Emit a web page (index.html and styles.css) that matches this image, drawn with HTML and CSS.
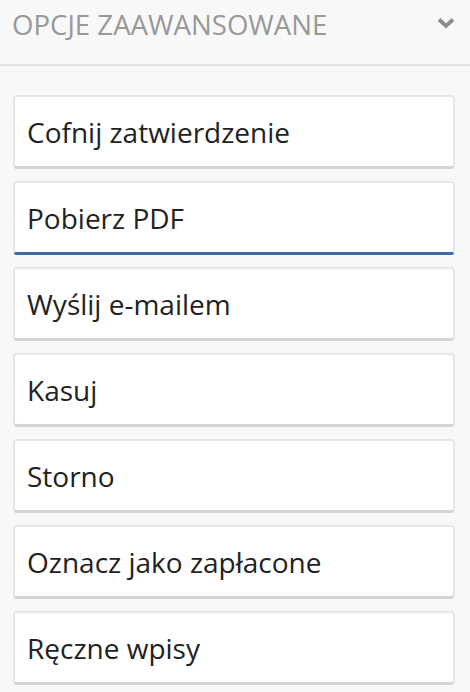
FILE: index.html
```html
<!DOCTYPE html>
<html lang="pl">
<head>
<meta charset="utf-8">
<link rel="stylesheet" href="styles.css">
</head>
<body>
<div class="panel">
  <div class="header">
    <span class="title">OPCJE ZAAWANSOWANE</span>
    <svg class="chev" width="18" height="12" viewBox="0 0 18 12"><path d="M2 2.5 L9 9 L16 2.5" fill="none" stroke="#8c8c8c" stroke-width="3.8" stroke-linecap="butt" stroke-linejoin="miter"/></svg>
  </div>
  <div class="list">
    <button class="btn">Cofnij zatwierdzenie</button>
    <button class="btn active">Pobierz PDF</button>
    <button class="btn">Wyślij e-mailem</button>
    <button class="btn">Kasuj</button>
    <button class="btn">Storno</button>
    <button class="btn">Oznacz jako zapłacone</button>
    <button class="btn">Ręczne wpisy</button>
  </div>
</div>
</body>
</html>
```
FILE: styles.css
```css
html, body {
  margin: 0;
  padding: 0;
  background: #f8f8f8;
}
body {
  font-family: "Open Sans", "DejaVu Sans", sans-serif;
  width: 470px;
  height: 692px;
  overflow: hidden;
}
.header {
  height: 66px;
  border-bottom: 2px solid #e3e3e3;
  display: flex;
  align-items: flex-start;
  justify-content: space-between;
  padding: 0 15px 0 12px;
  box-sizing: border-box;
}
.title {
  font-size: 27.6px;
  color: #999999;
  line-height: 1;
  margin-top: 11px;
}
.chev {
  margin-top: 17px;
}
.list {
  display: flex;
  flex-direction: column;
  gap: 12px;
  padding: 29px 15px 0 13px;
}
.btn {
  display: flex;
  align-items: center;
  height: 74px;
  box-sizing: border-box;
  background: #ffffff;
  border: 2px solid #e6e6e6;
  border-bottom: 3px solid #d5d5d5;
  border-radius: 4px;
  padding: 1px 0 0 12px;
  font-family: "Open Sans", "DejaVu Sans", sans-serif;
  font-size: 28px;
  color: #222222;
  text-align: left;
  margin: 0;
}
.btn.active {
  border-bottom: 3px solid #3d6aa9;
}
```
